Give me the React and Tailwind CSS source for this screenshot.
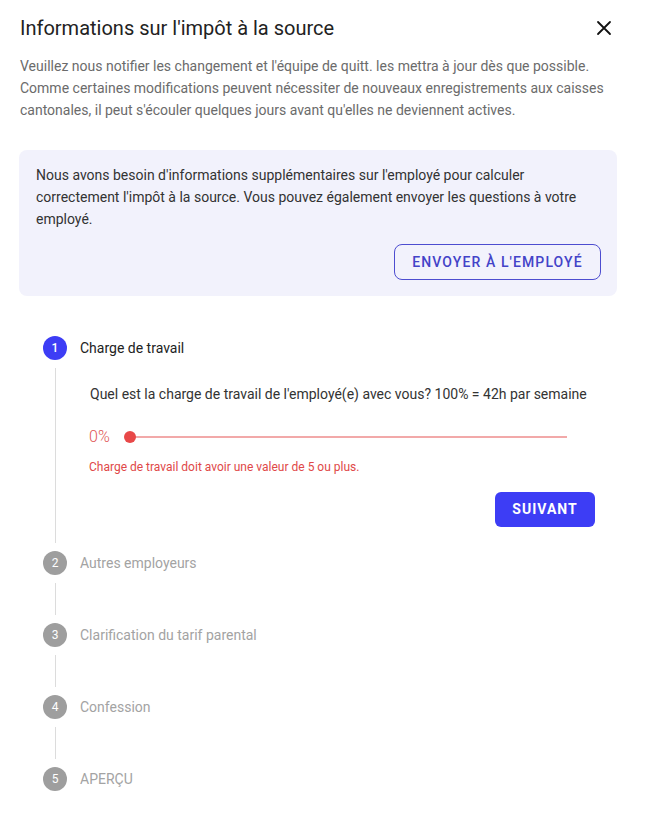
import React from "react";

const steps = [
    { n: 2, label: "Autres employeurs" },
    { n: 3, label: "Clarification du tarif parental" },
    { n: 4, label: "Confession" },
    { n: 5, label: "APERÇU" },
];

function StepHead({ n, label, active }) {
    return (
        <div className="flex items-center h-6">
            <div
                className={
                    "w-6 h-6 rounded-full flex items-center justify-center text-[12px] text-white " +
                    (active ? "bg-[#3d3df5] font-medium" : "bg-[#9e9e9e]")
                }
            >
                {n}
            </div>
            <span className={"ml-[13px] text-[14px] " + (active ? "text-[#222]" : "text-[#a3a3a3]")}>
                {label}
            </span>
        </div>
    );
}

export default function App() {
    return (
        <div className="w-[646px] min-h-[818px] bg-white px-5 pt-[14px] font-['Roboto',sans-serif]">
            <div className="flex items-center justify-between">
                <h1 className="text-[20px] leading-7 text-[#222] font-normal">
                    Informations sur l'impôt à la source
                </h1>
                <button className="mr-[14px] text-[#111]">
                    <svg width="16" height="16" viewBox="0 0 16 16" fill="none" stroke="currentColor" strokeWidth="1.8" strokeLinecap="round">
                        <path d="M2 2 L14 14 M14 2 L2 14" />
                    </svg>
                </button>
            </div>
            <p className="mt-[13px] text-[14px] leading-[22px] text-[#6b6b6b]">
                Veuillez nous notifier les changement et l'équipe de quitt. les mettra à jour dès que possible.
                Comme certaines modifications peuvent nécessiter de nouveaux enregistrements aux caisses
                cantonales, il peut s'écouler quelques jours avant qu'elles ne deviennent actives.
            </p>

            <div className="mt-[29px] w-[598px] -ml-px rounded-lg bg-[#f2f2fc] pl-[17px] pr-4 pt-[14px] pb-4">
                <p className="text-[14px] leading-[22px] text-[#333]">
                    Nous avons besoin d'informations supplémentaires sur l'employé pour calculer
                    correctement l'impôt à la source. Vous pouvez également envoyer les questions à votre
                    employé.
                </p>
                <div className="flex justify-end mt-[14px]">
                    <button className="h-9 w-[207px] rounded-lg border border-[#4d4dd0] text-[#4343c8] text-[14px] font-medium tracking-[1.1px]">
                        ENVOYER À L'EMPLOYÉ
                    </button>
                </div>
            </div>

            <div className="mt-10 ml-[23px]">
                <StepHead n={1} label="Charge de travail" active />
                <div className="ml-3 my-2 border-l border-[#dcdcdc] pl-[34px] pt-[15px] pb-4 pr-[31px]">
                    <p className="text-[14px] leading-[22px] text-[#333]">
                        Quel est la charge de travail de l'employé(e) avec vous? 100% = 42h par semaine
                    </p>
                    <div className="mt-[21px] -ml-px flex items-center h-[22px]">
                        <span className="text-[16px] font-light text-[#e05555] w-[41px]">0%</span>
                        <div className="relative w-[437px] h-[2px] bg-[#f2a9a9]">
                            <div className="absolute -left-[6px] -top-[5px] w-3 h-3 rounded-full bg-[#e84848]" />
                        </div>
                    </div>
                    <p className="mt-[11px] -ml-px text-[12px] leading-4 text-[#e04848]">
                        Charge de travail doit avoir une valeur de 5 ou plus.
                    </p>
                    <div className="flex justify-end mt-[17px]">
                        <button className="h-[35px] w-[100px] rounded-md bg-[#3d3df5] text-white text-[14px] font-bold tracking-[1px]">
                            SUIVANT
                        </button>
                    </div>
                </div>
                {steps.map((s, i) => (
                    <div key={s.n}>
                        <StepHead n={s.n} label={s.label} />
                        {i < steps.length - 1 && (
                            <div className="ml-3 my-2 h-8 border-l border-[#dcdcdc]" />
                        )}
                    </div>
                ))}
            </div>
        </div>
    );
}
